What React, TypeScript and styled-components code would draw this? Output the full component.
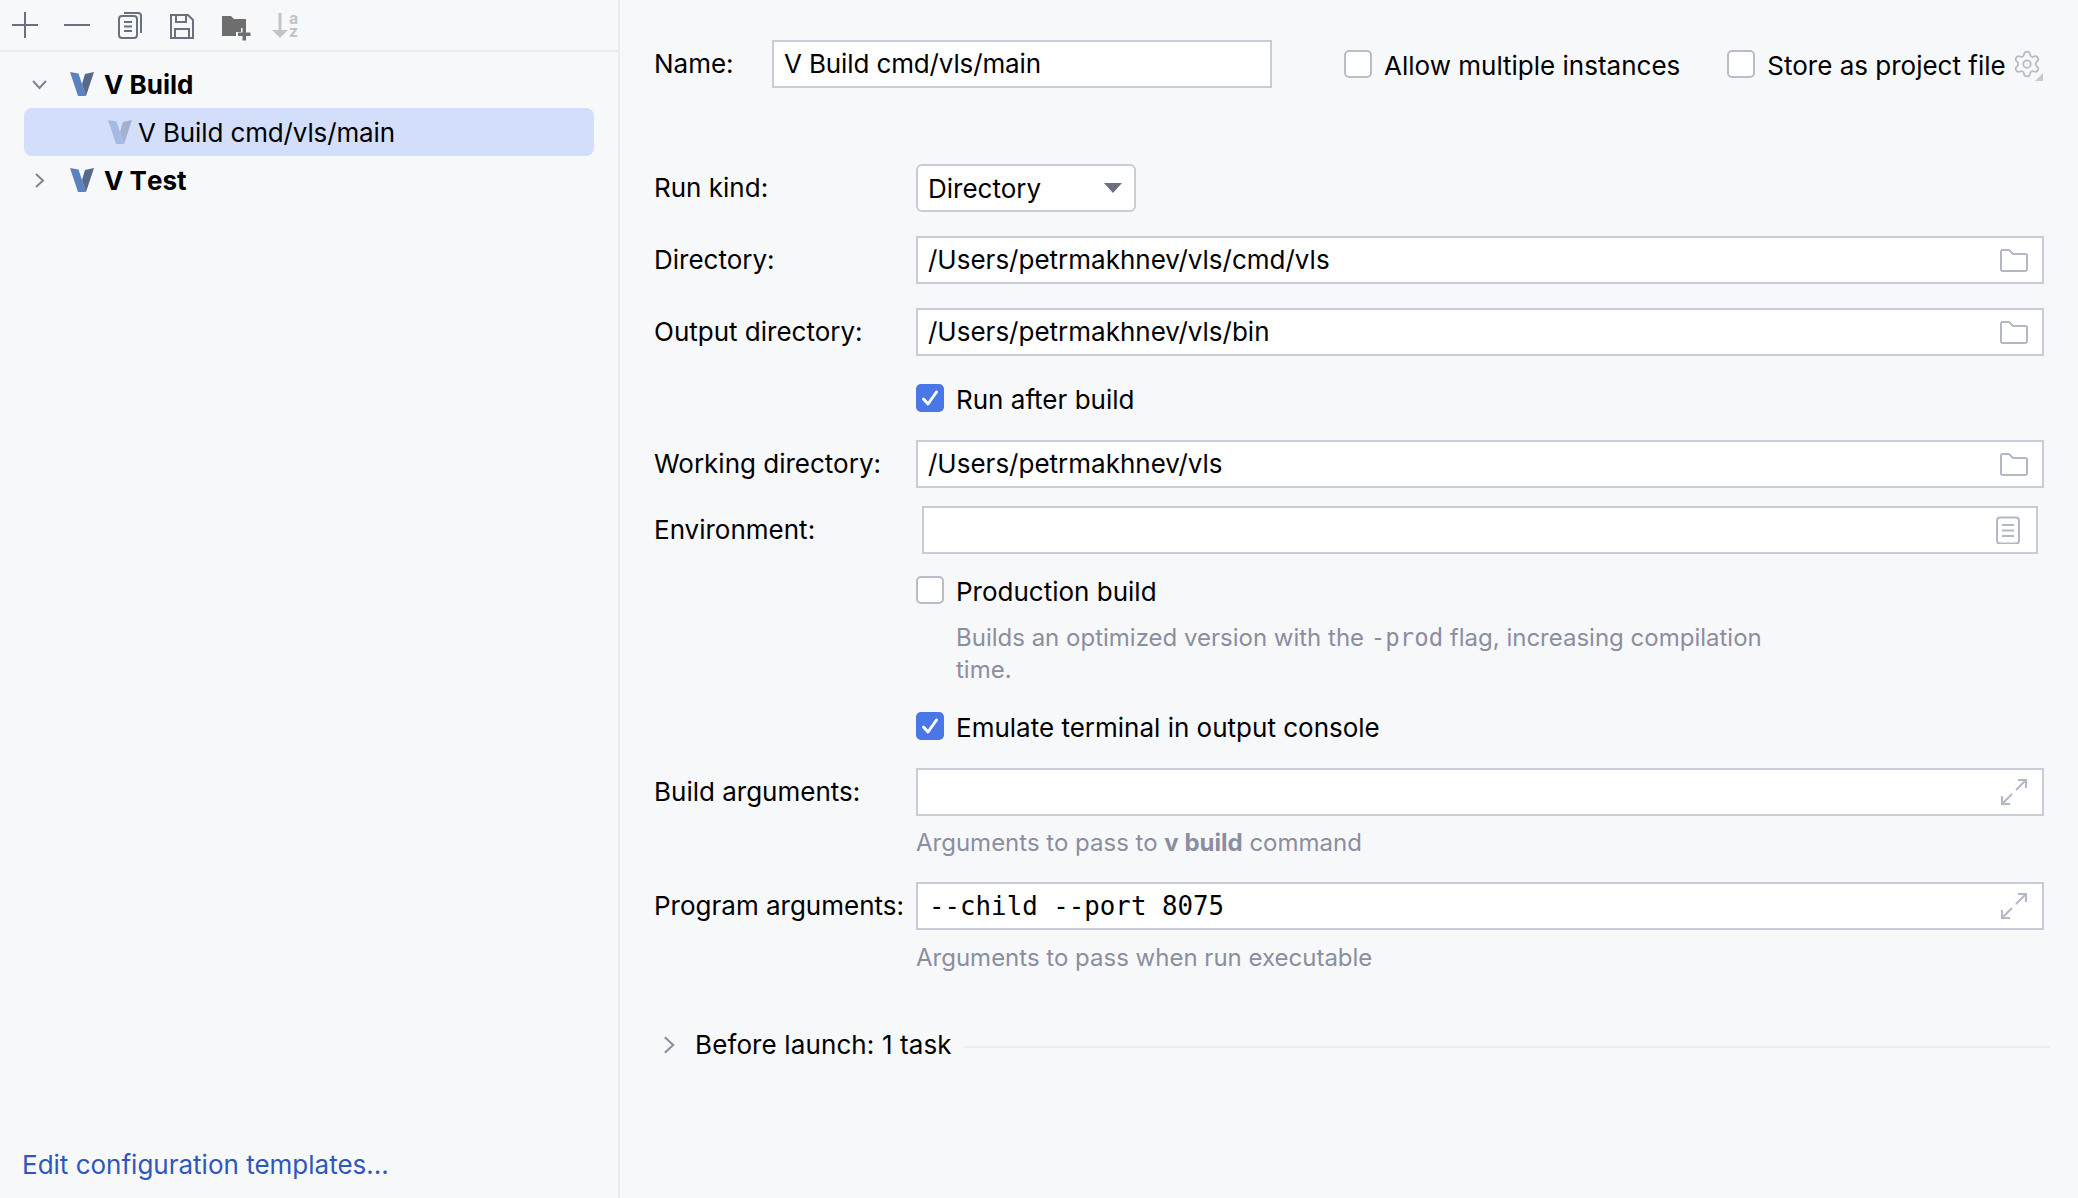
import React from "react"
import styled, { createGlobalStyle } from "styled-components"
import { Settings } from "lucide-react"

const Global = createGlobalStyle`
  html, body {
    margin: 0;
    padding: 0;
    background: #f7f8fa;
  }
  body {
    font-family: Inter, "Liberation Sans", sans-serif;
    font-size: 26px;
    color: #000;
    overflow: hidden;
  }
`

const Page = styled.div`
  display: flex;
  height: 1198px;
  background: #f7f8fa;
`

const Sidebar = styled.aside`
  width: 618px;
  flex: none;
  display: flex;
  flex-direction: column;
  border-right: 2px solid #ebecf0;
`

const Toolbar = styled.div`
  display: flex;
  align-items: center;
  gap: 24px;
  height: 50px;
  padding-left: 11px;
  border-bottom: 2px solid #ebecf0;
  flex: none;
`

const ToolIcon = styled.svg`
  width: 28px;
  height: 28px;
  flex: none;
  fill: none;
  stroke: #6c707e;
  stroke-width: 2;
  overflow: visible;
`

const SolidIcon = styled(ToolIcon)`
  stroke: none;
`

const Tree = styled.div`
  display: flex;
  flex-direction: column;
  padding: 8px 24px 0;
  flex: 1;
`

const TreeRow = styled.div<{ $selected?: boolean; $indent?: number }>`
  display: flex;
  align-items: center;
  height: 48px;
  padding-left: ${(p) => p.$indent ?? 8}px;
  border-radius: 8px;
  background: ${(p) => (p.$selected ? "#d3defa" : "transparent")};
  font-weight: ${(p) => (p.$selected ? 400 : 700)};
  font-kerning: ${(p) => (p.$selected ? "auto" : "none")};
  letter-spacing: ${(p) => (p.$selected ? "-0.13px" : "0")};
`

const Chevron = styled.svg`
  width: 15px;
  height: 15px;
  flex: none;
  margin-right: 23px;
  fill: none;
  stroke: #7f8394;
  stroke-width: 2;
`

const VMark = styled.svg<{ $dim?: boolean }>`
  width: 24px;
  height: 24px;
  flex: none;
  margin-right: ${(p) => (p.$dim ? 6 : 10)}px;
  opacity: ${(p) => (p.$dim ? 0.38 : 1)};
`

const FooterLink = styled.a`
  flex: none;
  padding: 0 0 17px 22px;
  line-height: 32px;
  color: #2f57bb;
  text-decoration: none;
`

const Form = styled.main`
  flex: 1;
  min-width: 0;
  display: flex;
  flex-direction: column;
  padding: 40px 34px 0 34px;
`

const Row = styled.div<{ $gap?: number }>`
  display: flex;
  align-items: center;
  min-height: 28px;
  margin-top: ${(p) => p.$gap ?? 0}px;
`

const Label = styled.label<{ $width?: number }>`
  width: ${(p) => p.$width ?? 262}px;
  flex: none;
  white-space: nowrap;
  margin-bottom: 2px;
`

const Field = styled.div<{ $inset?: boolean }>`
  flex: 1;
  min-width: 0;
  display: flex;
  align-items: center;
  justify-content: space-between;
  box-sizing: border-box;
  height: 48px;
  padding: 0 14px 0 10px;
  background: #fff;
  border: 2px solid #c9ccd6;
  margin: ${(p) => (p.$inset ? "0 6px 0 6px" : "0")};
`

const FieldText = styled.span`
  margin-bottom: 2px;
`

const NameText = styled(FieldText)`
  letter-spacing: -0.13px;
`

const NameField = styled(Field)`
  flex: none;
  width: 500px;
  margin-left: 38px;
`

const Mono = styled.span`
  font-family: "DejaVu Sans Mono", "Liberation Mono", monospace;
  font-size: 25.8px;
  padding-left: 1px;
`

const Combo = styled.div`
  width: 220px;
  height: 48px;
  box-sizing: border-box;
  display: flex;
  align-items: center;
  justify-content: space-between;
  padding: 0 12px 0 10px;
  background: #fff;
  border: 2px solid #c9ccd6;
  border-radius: 6px;
`

const Caret = styled.span`
  width: 0;
  height: 0;
  border-left: 9px solid transparent;
  border-right: 9px solid transparent;
  border-top: 10px solid #6c707e;
`

const Box = styled.span<{ $checked?: boolean }>`
  width: 28px;
  height: 28px;
  flex: none;
  box-sizing: border-box;
  display: flex;
  align-items: center;
  justify-content: center;
  border-radius: 5px;
  background: ${(p) => (p.$checked ? "#4a77e8" : "#fff")};
  border: 2px solid ${(p) => (p.$checked ? "#4a77e8" : "#b9bcc9")};
`

const CheckRow = styled.div<{ $left?: number }>`
  display: flex;
  align-items: center;
  gap: 12px;
  flex: none;
  white-space: nowrap;
  margin-left: ${(p) => p.$left ?? 0}px;
`

const CheckText = styled.span`
  line-height: 25px;
  margin-top: 3px;
`

const Indented = styled.div<{ $gap?: number }>`
  margin: ${(p) => p.$gap ?? 0}px 0 0 262px;
`

const Comment = styled.p<{ $indent?: number; $width?: number }>`
  margin: 0;
  padding-left: ${(p) => p.$indent ?? 0}px;
  max-width: ${(p) => p.$width ?? 1000}px;
  font-size: 24px;
  line-height: 32px;
  color: #8b8e9f;

  b {
    font-weight: 700;
  }
  code {
    font-family: "DejaVu Sans Mono", "Liberation Mono", monospace;
    font-size: 24px;
    line-height: 1;
  }
`

const TaskTitle = styled.span`
  letter-spacing: 0.12px;
`

const Separator = styled.div`
  flex: 1;
  height: 2px;
  margin: 4px -6px 0 12px;
  background: #ebecf0;
`

const FieldIcon = styled.svg`
  width: 28px;
  height: 28px;
  flex: none;
  fill: none;
  stroke: #b4b8c6;
  stroke-width: 2;
`

const GearWrap = styled.span`
  position: relative;
  display: flex;
  margin-left: 6px;
  color: #b9bbc4;
`

const GearCorner = styled.span`
  position: absolute;
  right: -1px;
  bottom: -2px;
  width: 0;
  height: 0;
  border-left: 8px solid transparent;
  border-bottom: 8px solid #c9cad0;
`

const Expander = styled(Chevron)`
  width: 18px;
  height: 18px;
  margin: 0 17px 0 6px;
  stroke: #8a8e9e;
  stroke-width: 1.7;
`

const VIcon = ({ dim }: { dim?: boolean }) => (
  <VMark $dim={dim} viewBox="0 0 24 24">
    <polygon points="0,0 8.500,1.500 12,12 16,24 8,24" fill="#5b82c0" />
    <polygon points="24,0 15,2 12,12 16,24" fill="#56688c" />
  </VMark>
)

const Check = () => (
  <svg width="20" height="20" viewBox="0 0 20 20" fill="none">
    <path d="M3.500 11l4.500 5L16.500 4" stroke="#fff" strokeWidth="3" strokeLinecap="round" strokeLinejoin="round" />
  </svg>
)

const Folder = () => (
  <FieldIcon viewBox="0 0 28 28">
    <path d="M1 5.500a1.500 1.500 0 0 1 1.500-1.500h6.500l4 4h12.500a1.500 1.500 0 0 1 1.500 1.500v14a1.500 1.500 0 0 1-1.500 1.500h-23a1.500 1.500 0 0 1-1.500-1.500z" />
  </FieldIcon>
)

const Expand = () => (
  <FieldIcon viewBox="0 0 28 28">
    <path d="M16 12L26 2M18 2h8v8" />
    <path d="M12 16L2 26M2 18v8h8" />
  </FieldIcon>
)

const Option = ({ checked, children, left }: { checked?: boolean; children: React.ReactNode; left?: number }) => (
  <CheckRow $left={left}>
    <Box $checked={checked}>{checked && <Check />}</Box>
    <CheckText>{children}</CheckText>
  </CheckRow>
)

export default function App() {
  return (
    <Page>
      <Global />
      <Sidebar>
        <Toolbar>
          <ToolIcon viewBox="0 0 28 28">
            <path d="M1 14h26M14 1v26" />
          </ToolIcon>
          <ToolIcon viewBox="0 0 28 28">
            <path d="M1 14h26" />
          </ToolIcon>
          <ToolIcon viewBox="0 0 28 28">
            <rect x="4" y="5" width="18" height="22" rx="3" />
            <path d="M9 2h14a3 3 0 0 1 3 3v17" />
            <path d="M9 11h8M9 15.500h8M9 20h8" />
          </ToolIcon>
          <ToolIcon viewBox="0 0 28 28">
            <path d="M4 4h17l5 5v18H4z" />
            <path d="M9 4v7h10V4M8 27v-9h14v9" />
          </ToolIcon>
          <SolidIcon viewBox="0 0 28 28">
            <path fill="#6e6e6e" d="M3 5h9l3 3h12v9h-5v4h-5v4H3z" />
            <path fill="#6e6e6e" d="M23.500 17h3.500v4.500h4.500V25H27v4.500h-3.500V25H19v-3.500h4.500z" />
          </SolidIcon>
          <SolidIcon viewBox="0 0 28 28">
            <path fill="#c4c4c4" d="M7.500 2h3v17H17l-8 8-8-8h6.500z" />
            <text x="18" y="13" fontSize="16" fontWeight="700" fill="#c4c4c4" fontFamily="Inter, sans-serif">a</text>
            <text x="18" y="26" fontSize="16" fontWeight="700" fill="#c4c4c4" fontFamily="Inter, sans-serif">z</text>
          </SolidIcon>
        </Toolbar>
        <Tree>
          <TreeRow>
            <Chevron viewBox="0 0 15 15">
              <path d="M1 4l6.500 7L14 4" />
            </Chevron>
            <VIcon />
            V Build
          </TreeRow>
          <TreeRow $selected $indent={84}>
            <VIcon dim />
            V Build cmd/vls/main
          </TreeRow>
          <TreeRow>
            <Chevron viewBox="0 0 15 15">
              <path d="M4 1l7 6.500L4 14" />
            </Chevron>
            <VIcon />
            V Test
          </TreeRow>
        </Tree>
        <FooterLink>Edit configuration templates...</FooterLink>
      </Sidebar>
      <Form>
        <Row>
          <Label $width={80}>Name:</Label>
          <NameField>
            <NameText>V Build cmd/vls/main</NameText>
          </NameField>
          <Option left={72}>Allow multiple instances</Option>
          <Option left={47}>Store as project file</Option>
          <GearWrap>
            <Settings size={30} strokeWidth={1.4} />
            <GearCorner />
          </GearWrap>
        </Row>
        <Row $gap={76}>
          <Label>Run kind:</Label>
          <Combo>
            Directory
            <Caret />
          </Combo>
        </Row>
        <Row $gap={24}>
          <Label>Directory:</Label>
          <Field>
            <FieldText>/Users/petrmakhnev/vls/cmd/vls</FieldText>
            <Folder />
          </Field>
        </Row>
        <Row $gap={24}>
          <Label>Output directory:</Label>
          <Field>
            <FieldText>/Users/petrmakhnev/vls/bin</FieldText>
            <Folder />
          </Field>
        </Row>
        <Indented $gap={28}>
          <Option checked>Run after build</Option>
        </Indented>
        <Row $gap={28}>
          <Label>Working directory:</Label>
          <Field>
            <FieldText>/Users/petrmakhnev/vls</FieldText>
            <Folder />
          </Field>
        </Row>
        <Row $gap={18}>
          <Label>Environment:</Label>
          <Field $inset>
            <span />
            <FieldIcon viewBox="0 0 28 28">
              <rect x="3" y="1.500" width="22" height="26" rx="3" />
              <path d="M8 9h12M8 14.500h12M8 20h12" />
            </FieldIcon>
          </Field>
        </Row>
        <Indented $gap={22}>
          <Option>Production build</Option>
        </Indented>
        <Indented $gap={18}>
          <Comment $indent={40} $width={840}>
            Builds an optimized version with the <code>-prod</code> flag, increasing compilation time.
          </Comment>
        </Indented>
        <Indented $gap={26}>
          <Option checked>Emulate terminal in output console</Option>
        </Indented>
        <Row $gap={28}>
          <Label>Build arguments:</Label>
          <Field>
            <span />
            <Expand />
          </Field>
        </Row>
        <Indented $gap={11}>
          <Comment>
            Arguments to pass to <b>v build</b> command
          </Comment>
        </Indented>
        <Row $gap={23}>
          <Label>Program arguments:</Label>
          <Field>
            <Mono>--child --port 8075</Mono>
            <Expand />
          </Field>
        </Row>
        <Indented $gap={12}>
          <Comment>Arguments to pass when run executable</Comment>
        </Indented>
        <Row $gap={55}>
          <Expander viewBox="0 0 15 15">
            <path d="M4 1l7 6.500L4 14" />
          </Expander>
          <TaskTitle>Before launch: 1 task</TaskTitle>
          <Separator />
        </Row>
      </Form>
    </Page>
  )
}
